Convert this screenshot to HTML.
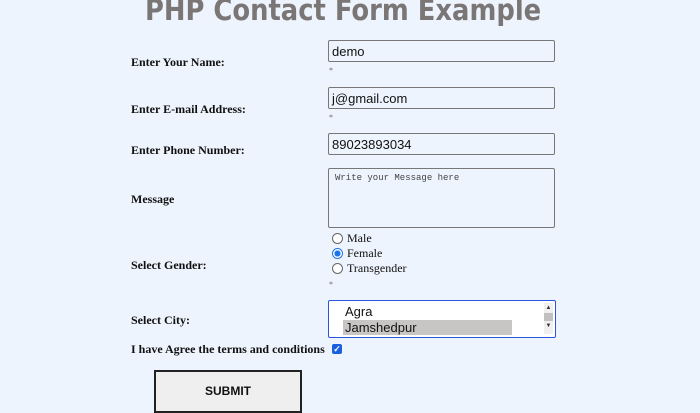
<!DOCTYPE html>
<html><head><style>
body{margin:0;width:700px;height:413px;background:#eef4fd;position:relative;overflow:hidden;font-family:"Liberation Serif",serif;}
.a{position:absolute;}
.t{left:145px;top:-7px;font:bold 29px "DejaVu Sans",sans-serif;color:#7a7676;white-space:nowrap;transform:scaleX(0.89);transform-origin:0 0}
.l{font-weight:bold;font-size:12px;color:#111;left:131px;}
.in{left:328px;width:227px;height:22px;border:1px solid #777;border-radius:2px;background:#eef4fd;font:13px "Liberation Sans",sans-serif;color:#111;box-sizing:border-box;padding:3px 0 0 3px;}
.st{font-size:8px;color:#666;left:329px;}
.r{left:332px;width:9px;height:9px;border:1px solid #666;border-radius:50%;background:#fff}
.rl{left:347px;font-size:12px;color:#111}
</style></head><body>
<div class="a t">PHP Contact Form Example</div>
<div class="a l" style="top:55px">Enter Your Name:</div>
<div class="a in" style="top:40px">demo</div>
<div class="a st" style="top:66px">*</div>
<div class="a l" style="top:102px">Enter E-mail Address:</div>
<div class="a in" style="top:87px">j@gmail.com</div>
<div class="a st" style="top:113px">*</div>
<div class="a l" style="top:143px">Enter Phone Number:</div>
<div class="a in" style="top:133px">89023893034</div>
<div class="a l" style="top:192px">Message</div>
<div class="a in" style="top:168px;height:60px;font:9px 'Liberation Mono',monospace;padding:4px 0 0 6px;color:#444">Write your Message here</div>
<div class="a r" style="top:233px"></div><div class="a rl" style="top:231px">Male</div>
<div class="a r" style="top:248px;border-color:#1a73e8;background:radial-gradient(#1a73e8 45%,#fff 50%)"></div><div class="a rl" style="top:246px">Female</div>
<div class="a r" style="top:263px"></div><div class="a rl" style="top:261px">Transgender</div>
<div class="a st" style="top:280px">*</div>
<div class="a l" style="top:258px">Select Gender:</div>
<div class="a l" style="top:313px">Select City:</div>
<div class="a" style="left:328px;top:300px;width:228px;height:38px;border:1.5px solid #2a55e0;border-radius:2px;background:#fff;box-sizing:border-box;font:13px 'Liberation Sans',sans-serif;color:#111">
<div class="a" style="left:16px;top:3px">Agra</div>
<div class="a" style="left:14px;top:19px;width:169px;height:15px;background:#c8c6c4;padding-left:2px;box-sizing:border-box">Jamshedpur</div>
<div class="a" style="right:2px;top:2px;width:9px;height:31px;background:#f0f0f0;font-size:6px;text-align:center;line-height:10px;color:#333">▲<br><span style="display:block;background:#c0c0c0;height:8px"></span>▼</div>
</div>
<div class="a l" style="top:342px">I have Agree the terms and conditions</div>
<div class="a" style="left:332px;top:344px;width:10px;height:10px;background:#1a5fe0;border-radius:2px;color:#fff;font:bold 9px sans-serif;line-height:10px;text-align:center">✓</div>
<div class="a" style="left:154px;top:370px;width:148px;height:43px;border:2px solid #222;background:#efefef;box-sizing:border-box;font:bold 12px 'Liberation Sans',sans-serif;text-align:center;line-height:39px;color:#111">SUBMIT</div>
</body></html>
